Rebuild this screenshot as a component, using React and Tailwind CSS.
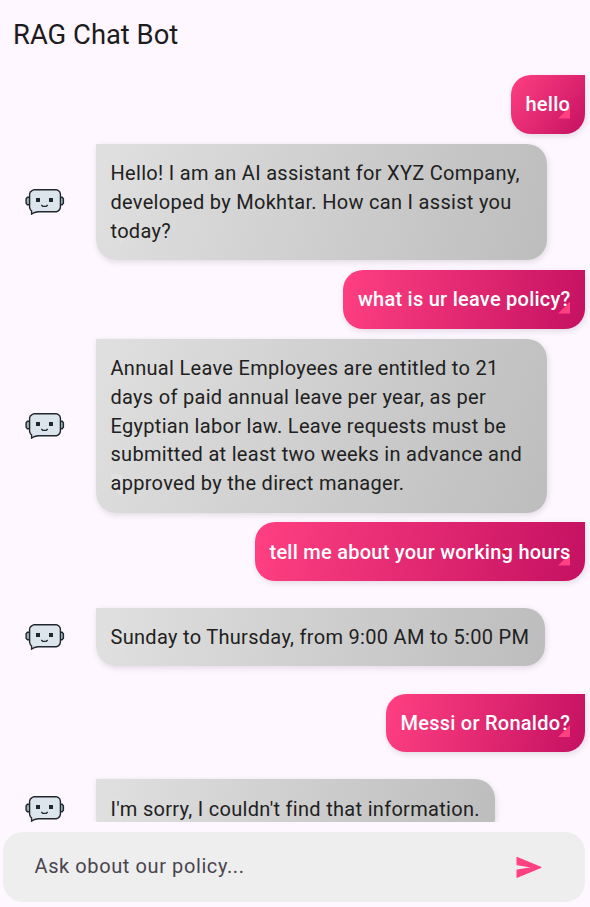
import React from "react";

const MESSAGES = [
  { from: "user", lines: ["hello"], row: "h-[58.5px]", size: "w-[74.5px] h-[58.5px] pt-[14.75px]", fill: "bg-[linear-gradient(128deg,#ff4081,#c51162)]" },
  { from: "bot", lines: ["Hello! I am an AI assistant for XYZ Company,", "developed by Mokhtar. How can I assist you", "today?"], row: "h-[116px] mt-[10.5px]", size: "w-[451.5px] h-[116px] pt-[15px] leading-[29px]", fill: "bg-[linear-gradient(104.4deg,#e0e0e0,#bdbdbd)]" },
  { from: "user", lines: ["what is ur leave policy?"], row: "h-[58.5px] mt-[10px]", size: "w-[242px] h-[58.5px] pt-[14.75px]", fill: "bg-[linear-gradient(103.5deg,#ff4081,#c51162)]" },
  { from: "bot", lines: ["Annual Leave Employees are entitled to 21", "days of paid annual leave per year, as per", "Egyptian labor law. Leave requests must be", "submitted at least two weeks in advance and", "approved by the direct manager."], row: "h-[173.5px] mt-[10.5px]", size: "w-[451.5px] h-[173.5px] pt-[15px]", fill: "bg-[linear-gradient(111deg,#e0e0e0,#bdbdbd)]" },
  { from: "user", lines: ["tell me about your working hours"], cursor: true, row: "h-[58.5px] mt-[9.5px]", size: "w-[330.5px] h-[58.5px] pt-[15.5px]", fill: "bg-[linear-gradient(100deg,#ff4081,#c51162)]" },
  { from: "bot", lines: ["Sunday to Thursday, from 9:00 AM to 5:00 PM"], row: "h-[58.5px] mt-[27.25px]", size: "w-[449.5px] h-[58.5px] pt-[15.25px]", fill: "bg-[linear-gradient(97.4deg,#e0e0e0,#bdbdbd)]" },
  { from: "user", lines: ["Messi or Ronaldo?"], row: "h-[58.5px] mt-[27.25px]", size: "w-[199.5px] h-[58.5px] pt-[15.25px]", fill: "bg-[linear-gradient(106.3deg,#ff4081,#c51162)]" },
  { from: "bot", lines: ["I'm sorry, I couldn't find that information."], row: "h-[58.5px] mt-[27.25px]", size: "w-[399.5px] h-[58.5px] pt-[15.25px]", fill: "bg-[linear-gradient(98.3deg,#e0e0e0,#bdbdbd)]" },
];

function Robot() {
  return (
    <svg viewBox="0 0 40 28" className="ml-[24.5px] h-7 w-10 shrink-0">
      <g stroke="#20272e" strokeWidth="1.4">
        <path d="M5 9.3H2.4L1.1 10.7v4.6l1.3 1.4H5zM34.5 9.3h2.6l1.3 1.4v4.6l-1.3 1.4h-2.6z" fill="#9fb1bd" />
        <path d="M9 1.7h22.4l2 .9 1.4 1.5.6 2v13.2l-.6 2-1.4 1.5-2 .9H13L9.6 24.5l-3 1.6V23l-1.2-1.4-.8-2.2V6.1l.6-2L7 2.6z" fill="#dce5ec" />
      </g>
      <path d="M11 10h4v4h-4zM24 10h4v4h-4z" fill="#20272e" />
      <path d="M16.3 16.9l1.5 1.4h3.4l1.5-1.4" fill="none" stroke="#20272e" strokeWidth="1.3" />
    </svg>
  );
}

function Bubble({ message }) {
  const user = message.from === "user";
  return (
    <div
      className={`relative shrink-0 px-[15px] shadow-[1px_2px_6px_rgba(0,0,0,0.12)] ${message.size} ${message.fill} ${
        user
          ? "rounded-[20px] rounded-tr-none font-medium tracking-[0.25px] text-white"
          : "rounded-[20px] rounded-tl-none tracking-[0.3px] text-[#212121]"
      }`}
    >
      {user ? (
        <span className="absolute right-[15px] bottom-[15px] h-3 w-3 bg-[#ff4081] [clip-path:polygon(100%_0,100%_100%,0_100%)]" />
      ) : (
        <span className="absolute bottom-[15px] left-[15px] h-6 w-3 bg-[#e0e0e0] [clip-path:polygon(0_0,100%_0,100%_100%,0_50%)]" />
      )}
      {message.lines.map((line) => (
        <p key={line} className="relative whitespace-nowrap">{line}</p>
      ))}
      {message.cursor && <span className="absolute top-[28px] right-[79px] h-1 w-1 rounded-full bg-[#e0101c]" />}
    </div>
  );
}

export default function App() {
  return (
    <main className="flex h-[907px] w-[590px] flex-col overflow-hidden bg-[#fef7ff] font-[Roboto,sans-serif] text-[20px] leading-[28.75px]">
      <header className="flex h-[67px] shrink-0 items-center pt-[4px] pl-[13px]">
        <h1 className="text-[27.4px] text-[#1d1b20]">RAG Chat Bot</h1>
      </header>
      <section className="flex h-[755px] shrink-0 flex-col overflow-hidden pt-[8px]">
        {MESSAGES.map((message) => (
          <div
            key={message.lines[0]}
            className={`flex shrink-0 items-center ${message.row} ${message.from === "user" ? "justify-end pr-[5px]" : "gap-[31px]"}`}
          >
            {message.from === "bot" && <Robot />}
            <Bubble message={message} />
          </div>
        ))}
      </section>
      <form className="mt-[10px] ml-[3px] flex h-[70px] w-[582px] shrink-0 items-center justify-between rounded-[20px] bg-[#eeeeee] pr-[42.5px] pl-[31.5px]">
        <input
          placeholder="Ask obout our policy..."
          className="mb-[2px] w-[400px] bg-transparent tracking-[0.6px] outline-none placeholder:text-[#49454f]"
        />
        <button type="button" aria-label="Send">
          <svg viewBox="0 0 24 24" className="h-[28.75px] w-[28.75px]" fill="#ff4081" stroke="#ff4081" strokeWidth="1" strokeLinejoin="round">
            <path d="M2.6 20.3 22.3 12 2.6 3.7 2.6 9.7 17 12 2.6 14.3z" />
          </svg>
        </button>
      </form>
    </main>
  );
}
